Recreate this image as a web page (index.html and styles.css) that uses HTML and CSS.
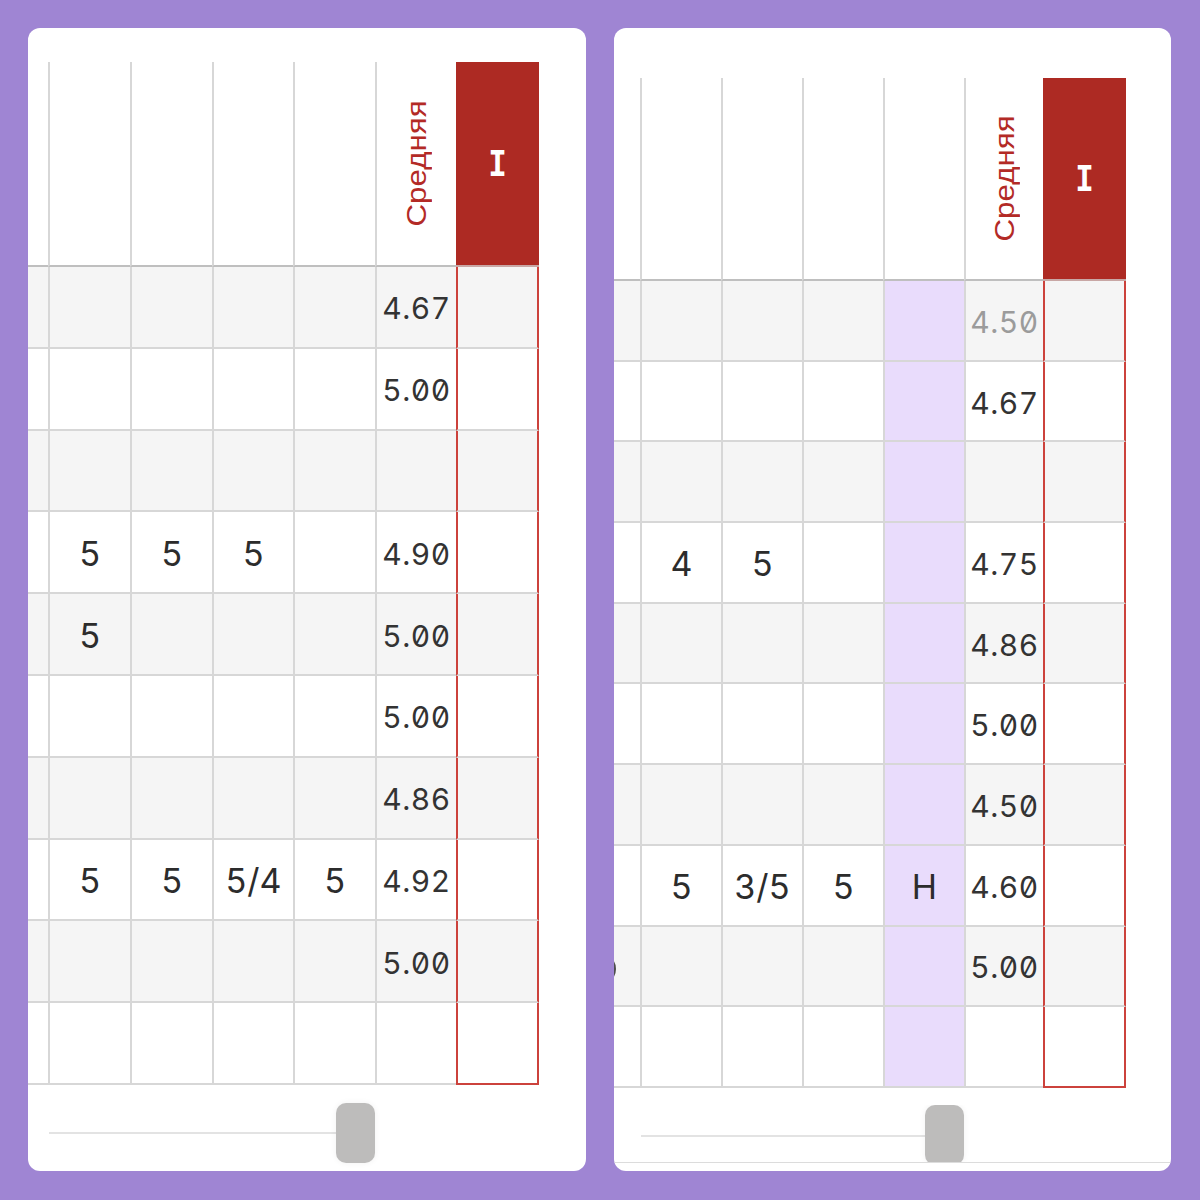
FILE: index.html
```html
<!DOCTYPE html>
<html lang="ru">
<head>
<meta charset="utf-8">
<title>Журнал</title>
<link rel="stylesheet" href="styles.css">
</head>
<body>
<main class="stage">
  <section class="card card-a">
    <div class="sheet">
      <div class="row head">
        <div class="cell stub"></div>
        <div class="cell"></div><div class="cell"></div><div class="cell"></div><div class="cell"></div>
        <div class="cell avg-h"><span class="vert">Средняя</span></div>
        <div class="cell term-h"><span class="term-label">I</span></div>
      </div>
      <div class="row alt"><div class="cell stub"></div><div class="cell"></div><div class="cell"></div><div class="cell"></div><div class="cell"></div><div class="cell avg">4.67</div><div class="cell term-cell"></div></div>
      <div class="row"><div class="cell stub"></div><div class="cell"></div><div class="cell"></div><div class="cell"></div><div class="cell"></div><div class="cell avg">5.00</div><div class="cell term-cell"></div></div>
      <div class="row alt"><div class="cell stub"></div><div class="cell"></div><div class="cell"></div><div class="cell"></div><div class="cell"></div><div class="cell avg"></div><div class="cell term-cell"></div></div>
      <div class="row"><div class="cell stub"></div><div class="cell grade">5</div><div class="cell grade">5</div><div class="cell grade">5</div><div class="cell"></div><div class="cell avg">4.90</div><div class="cell term-cell"></div></div>
      <div class="row alt"><div class="cell stub"></div><div class="cell grade">5</div><div class="cell"></div><div class="cell"></div><div class="cell"></div><div class="cell avg">5.00</div><div class="cell term-cell"></div></div>
      <div class="row"><div class="cell stub"></div><div class="cell"></div><div class="cell"></div><div class="cell"></div><div class="cell"></div><div class="cell avg">5.00</div><div class="cell term-cell"></div></div>
      <div class="row alt"><div class="cell stub"></div><div class="cell"></div><div class="cell"></div><div class="cell"></div><div class="cell"></div><div class="cell avg">4.86</div><div class="cell term-cell"></div></div>
      <div class="row"><div class="cell stub"></div><div class="cell grade">5</div><div class="cell grade">5</div><div class="cell grade">5/4</div><div class="cell grade">5</div><div class="cell avg">4.92</div><div class="cell term-cell"></div></div>
      <div class="row alt"><div class="cell stub"></div><div class="cell"></div><div class="cell"></div><div class="cell"></div><div class="cell"></div><div class="cell avg">5.00</div><div class="cell term-cell"></div></div>
      <div class="row last"><div class="cell stub"></div><div class="cell"></div><div class="cell"></div><div class="cell"></div><div class="cell"></div><div class="cell avg"></div><div class="cell term-cell"></div></div>
    </div>
    <div class="slider"><div class="track"></div><div class="thumb"></div></div>
  </section>

  <section class="card card-b">
    <div class="sheet">
      <div class="row head">
        <div class="cell stub"></div>
        <div class="cell"></div><div class="cell"></div><div class="cell"></div><div class="cell"></div>
        <div class="cell avg-h"><span class="vert">Средняя</span></div>
        <div class="cell term-h"><span class="term-label">I</span></div>
      </div>
      <div class="row alt"><div class="cell stub"></div><div class="cell"></div><div class="cell"></div><div class="cell"></div><div class="cell mark"></div><div class="cell avg muted">4.50</div><div class="cell term-cell"></div></div>
      <div class="row"><div class="cell stub"></div><div class="cell"></div><div class="cell"></div><div class="cell"></div><div class="cell mark"></div><div class="cell avg">4.67</div><div class="cell term-cell"></div></div>
      <div class="row alt"><div class="cell stub"></div><div class="cell"></div><div class="cell"></div><div class="cell"></div><div class="cell mark"></div><div class="cell avg"></div><div class="cell term-cell"></div></div>
      <div class="row"><div class="cell stub"></div><div class="cell grade">4</div><div class="cell grade">5</div><div class="cell"></div><div class="cell mark"></div><div class="cell avg">4.75</div><div class="cell term-cell"></div></div>
      <div class="row alt"><div class="cell stub"></div><div class="cell"></div><div class="cell"></div><div class="cell"></div><div class="cell mark"></div><div class="cell avg">4.86</div><div class="cell term-cell"></div></div>
      <div class="row"><div class="cell stub"></div><div class="cell"></div><div class="cell"></div><div class="cell"></div><div class="cell mark"></div><div class="cell avg">5.00</div><div class="cell term-cell"></div></div>
      <div class="row alt"><div class="cell stub"></div><div class="cell"></div><div class="cell"></div><div class="cell"></div><div class="cell mark"></div><div class="cell avg">4.50</div><div class="cell term-cell"></div></div>
      <div class="row"><div class="cell stub"></div><div class="cell grade">5</div><div class="cell grade">3/5</div><div class="cell grade">5</div><div class="cell mark grade">Н</div><div class="cell avg">4.60</div><div class="cell term-cell"></div></div>
      <div class="row alt"><div class="cell stub"><span class="edge-dot"></span></div><div class="cell"></div><div class="cell"></div><div class="cell"></div><div class="cell mark"></div><div class="cell avg">5.00</div><div class="cell term-cell"></div></div>
      <div class="row last"><div class="cell stub"></div><div class="cell"></div><div class="cell"></div><div class="cell"></div><div class="cell mark"></div><div class="cell avg"></div><div class="cell term-cell"></div></div>
    </div>
    <div class="slider"><div class="track"></div><div class="thumb"></div></div>
    <div class="foot"></div>
  </section>
</main>
</body>
</html>
```

FILE: styles.css
```css
* { box-sizing: border-box; }

html, body {
  margin: 0;
  padding: 0;
  background: #9f85d3;
}

body {
  width: 1200px;
  height: 1200px;
  font-family: Inter, "DejaVu Sans", sans-serif;
  color: #2f2f2f;
}

.stage {
  display: grid;
  grid-template-columns: 558px 557px;
  column-gap: 28px;
  padding: 28px 29px 29px 28px;
  height: 1200px;
}

.card {
  background: #ffffff;
  border-radius: 12px;
  overflow: hidden;
  height: 1143px;
  display: flex;
  flex-direction: column;
}

.card-a {
  padding-top: 34px;
  --cols: 20px 82px 82px 81px 82px 81px 83px;
  --head-h: 205px;
  --row-h: 81.8px;
  --track-l: 21px;
  --track-w: 287px;
  --slider-gap: 18px;
}

.card-b {
  padding-top: 50px;
  --cols: 26px 81px 81px 81px 81px 79px 83px;
  --head-h: 203px;
  --row-h: 80.7px;
  --track-l: 27px;
  --track-w: 284px;
  --slider-gap: 17px;
}

.sheet {
  display: flex;
  flex-direction: column;
  align-items: flex-start;
}

.row {
  display: grid;
  grid-template-columns: var(--cols);
  height: var(--row-h);
  background: #ffffff;
}

.row.alt { background: #f5f5f5; }

.row.head {
  height: var(--head-h);
  background: #ffffff;
}

.cell {
  border-left: 2px solid #d7d7d7;
  border-bottom: 2px solid #d7d7d7;
  display: flex;
  align-items: center;
  justify-content: center;
  min-width: 0;
}

.cell.stub { border-left: none; position: relative; }

.row.head .cell { border-bottom: 2px solid #bfbfbf; }

.cell.mark { background: #e9dcfc; }

.vert {
  writing-mode: vertical-rl;
  transform: rotate(180deg) scaleY(1.16);
  font-family: "Liberation Sans", Arial, sans-serif;
  font-size: 27px;
  line-height: 1;
  color: #b32a26;
  white-space: nowrap;
  margin-left: 2px;
}

.row.head .cell.term-h {
  background: #ad2a23;
  border-left: none;
  border-bottom-color: #c8a7a5;
}

.term-label {
  font-family: "DejaVu Sans Mono", monospace;
  font-weight: bold;
  font-size: 31px;
  line-height: 1;
  color: #ffffff;
  transform: scaleY(1.16);
}

.cell.term-cell {
  border-left: 2px solid #cc423c;
  border-right: 2px solid #cc423c;
}

.row.last .cell.term-cell { border-bottom-color: #cc423c; }

.avg {
  font-size: 30px;
  font-feature-settings: "tnum" 1, "zero" 1;
  color: #333333;
  letter-spacing: 0.5px;
  padding-top: 3px;
  font-weight: 400;
}

.avg.muted { color: #9b9b9b; }

.grade {
  font-size: 34px;
  font-feature-settings: "tnum" 1;
  color: #2c2c2c;
  padding-top: 2px;
}

.edge-dot {
  position: absolute;
  left: -12px;
  top: 31px;
  width: 14px;
  height: 22px;
  border-radius: 50%;
  background: #4d4d4d;
}

.slider {
  display: flex;
  align-items: center;
  height: 60px;
  margin-top: var(--slider-gap);
  padding-left: var(--track-l);
}

.card-b .slider {
  height: 57px;
  align-items: flex-start;
  overflow: hidden;
}

.track {
  width: var(--track-w);
  height: 2px;
  background: #e3e3e3;
}

.card-b .track { margin-top: 30px; }

.thumb {
  width: 39px;
  height: 60px;
  border-radius: 10px;
  background: #bdbcbb;
  box-shadow: 0 0 6px rgba(0, 0, 0, 0.06);
}

.foot {
  border-top: 1px solid #dcdcdc;
  flex: 1;
}
```
